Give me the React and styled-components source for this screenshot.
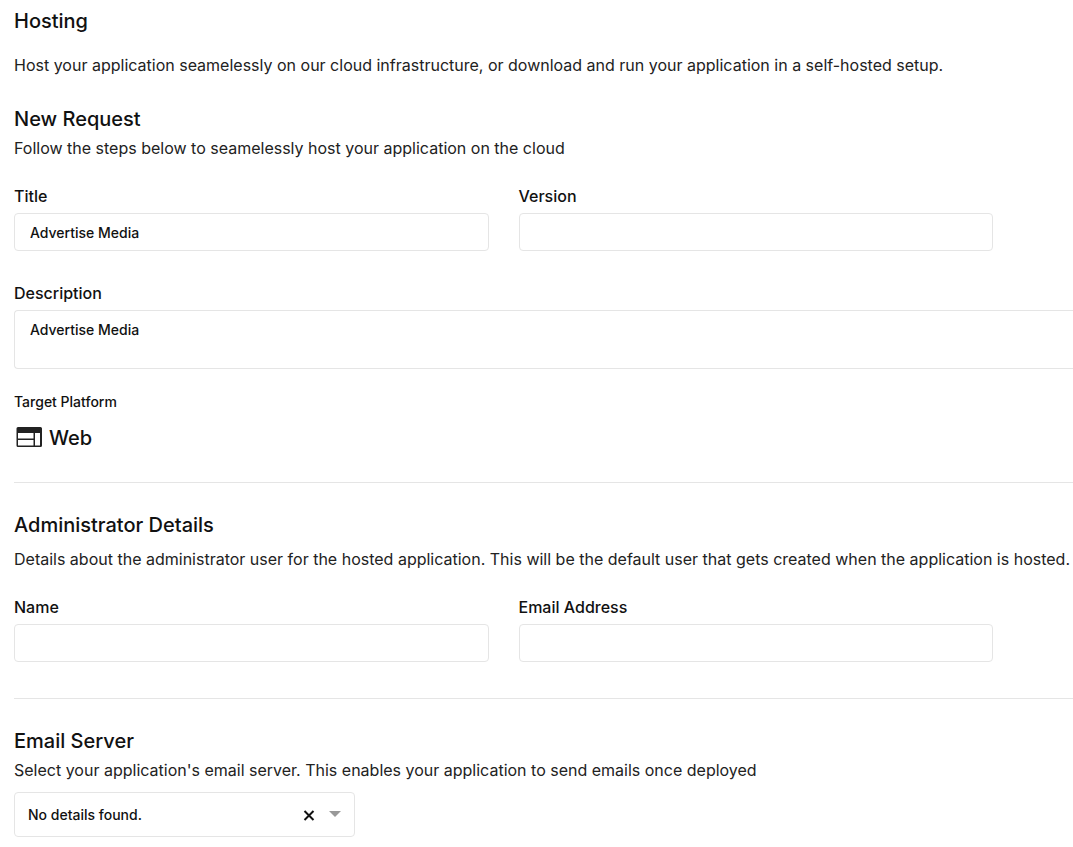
import React from "react";
import styled, { createGlobalStyle } from "styled-components";

const Global = createGlobalStyle`
  * { box-sizing: border-box; }
  body { margin: 0; background: #fff; color: #111; font-family: Inter, "Liberation Sans", sans-serif; overflow-x: hidden; }
  h1, h2, p { margin: 0; }
`;
const Page = styled.main`padding: 8px 0 10px 14px;`;
const Heading = styled.h2`
  font-size: 20px; line-height: 26px; font-weight: 500;
`;
const Text = styled.p`
  font-size: 16px; line-height: 24px; font-weight: 400; color: #222; white-space: nowrap;
  margin-top: ${(p) => p.$gap || 0}px;
`;
const Section = styled.section`
  padding-top: ${(p) => p.$top}px;
`;
const Columns = styled.div`
  display: grid; grid-template-columns: 1fr 1fr; gap: 30px;
  margin-top: 24px; padding-right: 80px;
`;
const Field = styled.div`
  display: flex; flex-direction: column; gap: 5px;
  margin-top: ${(p) => p.$top || 0}px;
`;
const Label = styled.label`font-size: 16px; line-height: 24px; font-weight: 500;`;
const Input = styled.input`
  width: 100%; height: 38px; border: 1px solid #e5e5e5; border-radius: 4px;
  padding: 0 15px; font: 500 14px/20px Inter, sans-serif; color: #111; background: #fff;
`;
const Area = styled.textarea`
  display: block; width: 100%; height: 59px; border: 1px solid #e5e5e5; border-right: 0;
  border-radius: 4px 0 0 4px; padding: 9px 15px; font: 500 14px/20px Inter, sans-serif;
  color: #111; resize: none; background: #fff;
`;
const Platform = styled.div`
  display: flex; align-items: center; gap: 6px; font-size: 20px; line-height: 28px; font-weight: 500;
  margin-top: 12px; padding-left: 1px;
`;
const SmallTitle = styled.p`font-size: 14px; line-height: 20px; font-weight: 500;`;
const Rule = styled.hr`
  border: 0; border-top: 1px solid #e5e5e5; margin: ${(p) => p.$top}px 0 0;
`;
const SelectBox = styled.div`
  display: grid; grid-template-columns: 1fr auto; align-items: center;
  width: 341px; max-width: 100%; height: 45px; margin-top: 10px;
  border: 1px solid #e5e5e5; border-radius: 4px;
`;
const Select = styled.select`
  appearance: none; width: 100%; height: 43px; border: 0; background: transparent;
  padding: 0 70px 0 13px; font: 500 14px/20px Inter, sans-serif; color: #111;
  grid-column: 1 / 3; grid-row: 1;
`;
const Controls = styled.div`
  grid-column: 2; grid-row: 1; display: flex; align-items: center; gap: 14px; padding-right: 13px;
  pointer-events: none;
`;
const Clear = styled.button`
  display: flex; padding: 0; border: 0; background: none; pointer-events: auto;
`;

export default function App() {
  return (
    <Page>
      <Global />
      <Heading as="h1">Hosting</Heading>
      <Text $gap={19}>Host your application seamelessly on our cloud infrastructure, or download and run your application in a self-hosted setup.</Text>
      <Section $top={29}>
        <Heading>New Request</Heading>
        <Text $gap={4}>Follow the steps below to seamelessly host your application on the cloud</Text>
        <Columns>
          <Field><Label htmlFor="title">Title</Label><Input id="title" defaultValue="Advertise Media" /></Field>
          <Field><Label htmlFor="version">Version</Label><Input id="version" /></Field>
        </Columns>
        <Field $top={30}><Label htmlFor="description">Description</Label><Area id="description" defaultValue="Advertise Media" /></Field>
        <Section $top={23}>
          <SmallTitle>Target Platform</SmallTitle>
          <Platform>
            <svg width="28" height="28" viewBox="0 0 28 28" aria-hidden="true">
              <path fill="#222" fillRule="evenodd" d="M3 3h22.500a1.500 1.500 0 0 1 1.500 1.500v17a1.500 1.500 0 0 1-1.500 1.500H3a1.500 1.500 0 0 1-1.500-1.500v-17A1.500 1.500 0 0 1 3 3zM3 9v5.500h15.500V9zM3 16v5.500h15.500V16zM20 9v12.500h5V9z" />
            </svg>
            Web
          </Platform>
        </Section>
      </Section>
      <Rule $top={30} />
      <Section $top={29}>
        <Heading>Administrator Details</Heading>
        <Text $gap={9}>Details about the administrator user for the hosted application. This will be the default user that gets created when the application is hosted.</Text>
        <Columns>
          <Field><Label htmlFor="name">Name</Label><Input id="name" /></Field>
          <Field><Label htmlFor="email">Email Address</Label><Input id="email" type="email" /></Field>
        </Columns>
      </Section>
      <Rule $top={36} />
      <Section $top={29}>
        <Heading>Email Server</Heading>
        <Text $gap={4}>Select your application's email server. This enables your application to send emails once deployed</Text>
        <SelectBox>
          <Select aria-label="Email Server"><option>No details found.</option></Select>
          <Controls>
            <Clear type="button" aria-label="Clear selection">
              <svg width="12" height="12" viewBox="0 0 12 12"><path d="M1.500 2l9 9M10.500 2l-9 9" stroke="#111" strokeWidth="2" /></svg>
            </Clear>
            <svg width="12" height="8" viewBox="0 0 12 8" aria-hidden="true"><path d="M0 0h12L6 6z" fill="#999" /></svg>
          </Controls>
        </SelectBox>
      </Section>
    </Page>
  );
}
